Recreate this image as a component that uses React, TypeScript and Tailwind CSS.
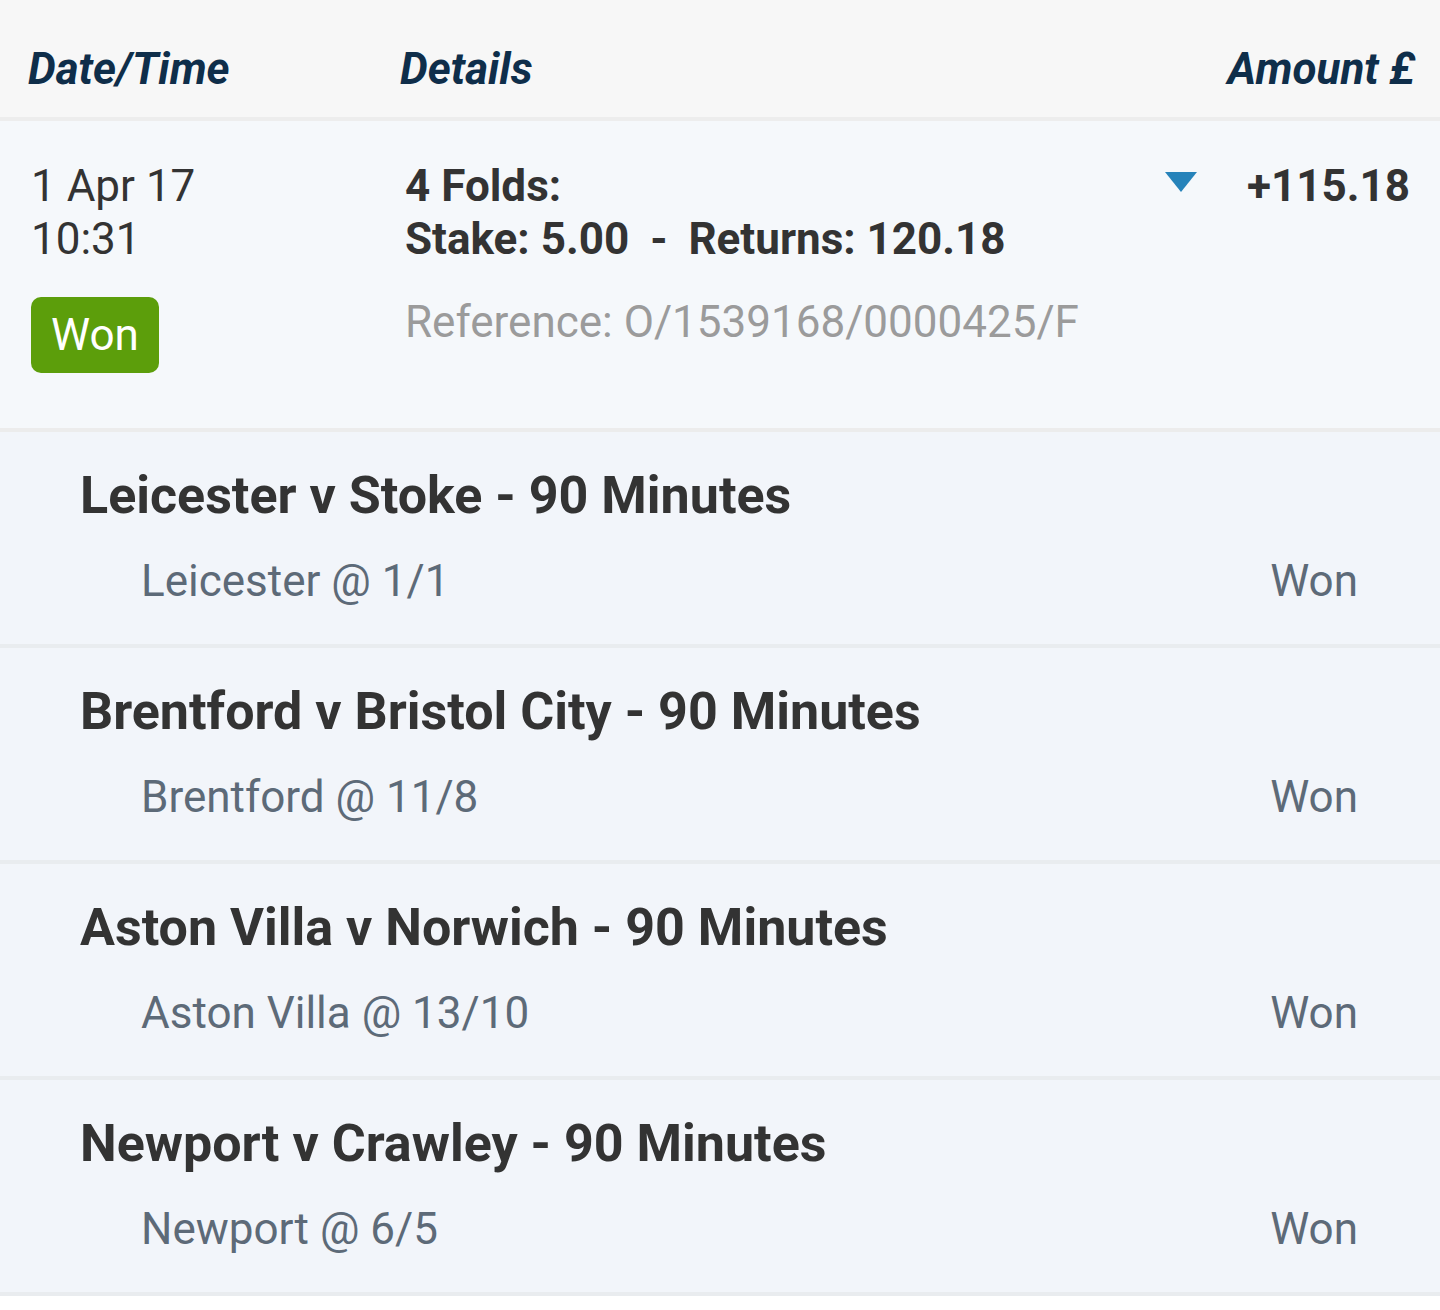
const legs = [
  { title: "Leicester v Stoke - 90 Minutes", pick: "Leicester @ 1/1", result: "Won" },
  { title: "Brentford v Bristol City - 90 Minutes", pick: "Brentford @ 11/8", result: "Won" },
  { title: "Aston Villa v Norwich - 90 Minutes", pick: "Aston Villa @ 13/10", result: "Won" },
  { title: "Newport v Crawley - 90 Minutes", pick: "Newport @ 6/5", result: "Won" },
];

function LegRow({ title, pick, result }: { title: string; pick: string; result: string }) {
  return (
    <div className="border-b-4 border-[#e9ecef] bg-[#f2f5fa] pt-[34px] pb-[36px] pl-[80px] pr-[82px]">
      <div className="text-[52px] font-bold leading-[60px] text-[#333333]">{title}</div>
      <div className="mt-[29px] flex justify-between pl-[61px] text-[44px] leading-[53px] text-[#5d6a78]">
        <span>{pick}</span>
        <span>{result}</span>
      </div>
    </div>
  );
}

export default function App() {
  return (
    <div className="min-h-screen bg-white font-['Roboto',sans-serif]">
      <div className="flex border-b-4 border-[#ededed] bg-[#f7f7f7] pt-[43px] pb-[21px] pl-[28px] pr-[25px] text-[44px] font-bold italic leading-[53px] text-[#0f2e4a]">
        <div className="w-[372px]">Date/Time</div>
        <div className="flex-1">Details</div>
        <div>Amount £</div>
      </div>

      <div className="flex border-b-4 border-[#ececec] bg-[#f5f8fb] pt-[39px] pb-[55px] pl-[31px] pr-[30px] text-[44px] leading-[53px]">
        <div className="w-[374px] text-[#333333]">
          <div>1 Apr 17</div>
          <div>10:31</div>
          <div className="mt-[31px] flex h-[76px] w-[128px] items-center justify-center rounded-[10px] bg-[#5c9e0b] text-white">
            Won
          </div>
        </div>
        <div className="flex-1">
          <div className="font-bold text-[#333333]">4 Folds:</div>
          <div className="font-bold text-[#333333]">
            Stake: 5.00 <span className="px-[10px]">-</span> Returns: 120.18
          </div>
          <div className="mt-[30px] text-[#9b9b9b]">Reference: O/1539168/0000425/F</div>
        </div>
        <div className="flex items-start">
          <svg width="32" height="20" viewBox="0 0 32 20" className="mt-[12px] mr-[50px]">
            <polygon points="0,0 32,0 16,20" fill="#2683ba" />
          </svg>
          <div className="font-bold text-[#333333]">+115.18</div>
        </div>
      </div>

      {legs.map((leg) => (
        <LegRow key={leg.title} {...leg} />
      ))}
    </div>
  );
}
